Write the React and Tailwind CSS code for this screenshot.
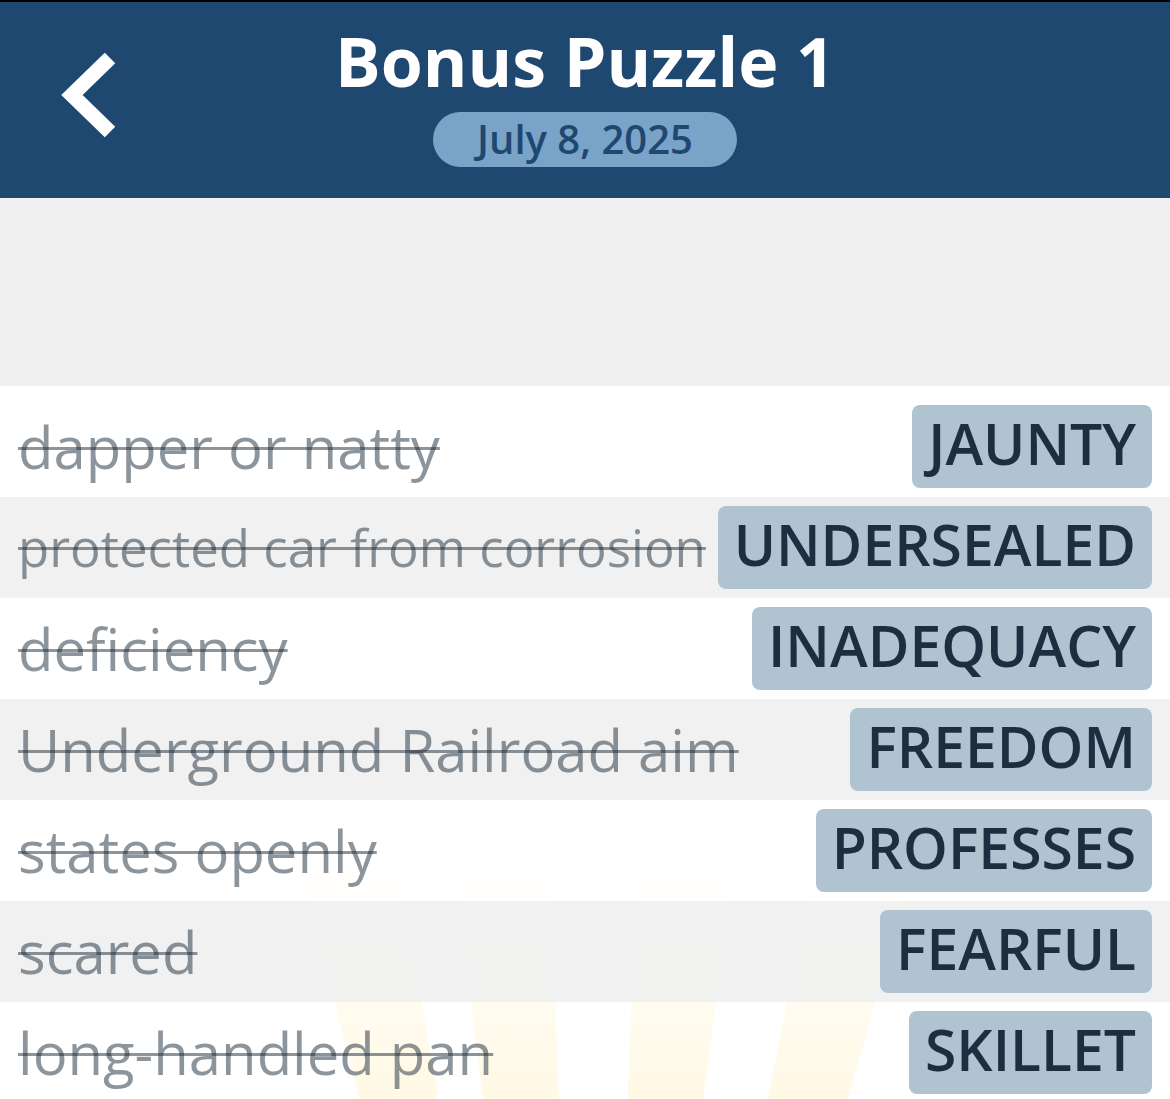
import React from "react";

// fit: clue sizes shrink when the clue is too long for its row
const clues = [
  { clue: "dapper or natty", answer: "JAUNTY" },
  { clue: "protected car from corrosion", answer: "UNDERSEALED", fit: true },
  { clue: "deficiency", answer: "INADEQUACY" },
  { clue: "Underground Railroad aim", answer: "FREEDOM" },
  { clue: "states openly", answer: "PROFESSES" },
  { clue: "scared", answer: "FEARFUL" },
  { clue: "long-handled pan", answer: "SKILLET" },
];

// faint sun rays behind the solved list
function SunRays() {
  const cx = 590;
  const cy = 1614;
  const rays = [-12, -4.4, 4.8, 13.6];
  return (
    <svg
      className="pointer-events-none absolute inset-0 h-full w-full"
      viewBox="0 0 1170 720"
      preserveAspectRatio="none"
    >
      <defs>
        <linearGradient
          id="rayFade"
          gradientUnits="userSpaceOnUse"
          x1="0"
          y1="480"
          x2="0"
          y2="720"
        >
          <stop offset="0" stopColor="#ffe9a0" stopOpacity="0" />
          <stop offset="1" stopColor="#ffe9a0" stopOpacity="0.28" />
        </linearGradient>
      </defs>
      {rays.map((deg) => {
        const a = ((deg - 90) * Math.PI) / 180;
        const w = 0.042;
        const r = 1700;
        const x1 = cx + r * Math.cos(a - w);
        const y1 = cy + r * Math.sin(a - w);
        const x2 = cx + r * Math.cos(a + w);
        const y2 = cy + r * Math.sin(a + w);
        return (
          <polygon
            key={deg}
            points={`${cx},${cy} ${x1},${y1} ${x2},${y2}`}
            fill="url(#rayFade)"
          />
        );
      })}
    </svg>
  );
}

function Row({ clue, answer, fit, shaded }) {
  return (
    <div
      className={`relative flex h-[101px] items-center justify-between gap-[8px] pl-[18px] pr-[18px] ${
        shaded ? "bg-[#f0f0f0]/90" : "bg-transparent"
      }`}
    >
      <span
        className={`min-w-0 whitespace-nowrap leading-none text-[#1a2a3a]/50 line-through decoration-[3px] ${
          fit ? "text-[51px]" : "text-[58px]"
        }`}
      >
        {clue}
      </span>
      <span className="flex h-[83px] shrink-0 items-center rounded-[8px] bg-[#b0c3d1] px-[16px] pb-[6px] text-[57px] font-semibold leading-none text-[#1c2e40]">
        {answer}
      </span>
    </div>
  );
}

export default function App() {
  return (
    <div className="min-h-screen bg-white font-['Open_Sans','Liberation_Sans',sans-serif]">
      <div className="h-[2px] bg-black" />
      <header className="grid h-[196px] grid-cols-[1fr_auto_1fr] bg-[#1f4870] shadow-[0_1px_2px_rgba(0,0,0,0.35)]">
        <div>
          <svg
            width="64"
            height="92"
            viewBox="0 0 64 92"
            className="ml-[58px] mt-[46px]"
          >
            <path
              d="M52 10 L14 47 L52 84"
              fill="none"
              stroke="#ffffff"
              strokeWidth="15"
              strokeLinejoin="miter"
            />
          </svg>
        </div>
        <div className="flex flex-col items-center pt-[25px]">
          <h1 className="text-[68px] font-bold leading-none text-white">
            Bonus Puzzle 1
          </h1>
          <div className="mt-[17px] flex h-[55px] w-[304px] items-center justify-center rounded-full bg-[#7aa3c8] pb-[2px] text-[40px] font-semibold leading-none text-[#1f4870]">
            July 8, 2025
          </div>
        </div>
        <div />
      </header>

      <div className="h-[188px] bg-[#f0f0f0]" />

      <div className="relative bg-white pt-[10px]">
        <SunRays />
        {clues.map((c, i) => (
          <Row key={c.answer} {...c} shaded={i % 2 === 1} />
        ))}
      </div>
    </div>
  );
}
